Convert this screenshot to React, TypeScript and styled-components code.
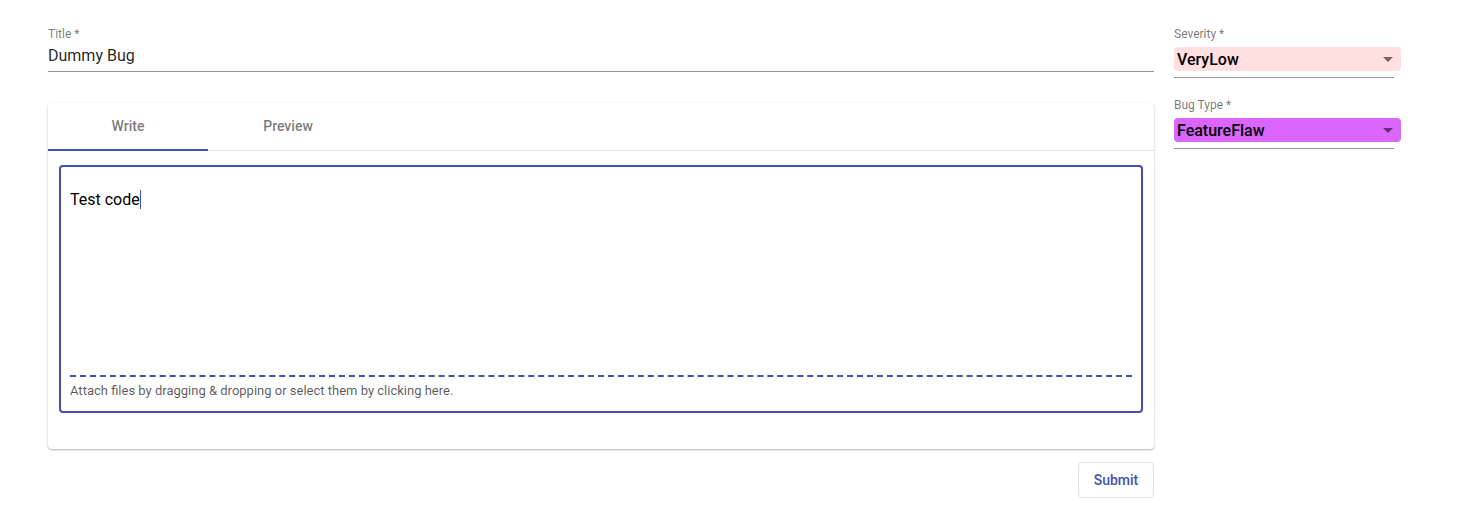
import React, { useState } from 'react';
import styled, { createGlobalStyle } from 'styled-components';

const GlobalStyle = createGlobalStyle`
  body {
    margin: 0;
    background: #fff;
    font-family: Roboto, "Liberation Sans", Arial, sans-serif;
  }
`;

const Page = styled.div`
  display: flex;
  gap: 20px;
  padding: 27px 48px 0 48px;
`;

const Main = styled.div`
  width: 1106px;
  display: flex;
  flex-direction: column;
`;

const Side = styled.div`
  width: 227px;
  display: flex;
  flex-direction: column;
  gap: 20px;
`;

const Field = styled.div`
  display: flex;
  flex-direction: column;
`;

const Label = styled.label`
  font-size: 12px;
  color: rgba(0, 0, 0, 0.54);
  line-height: 14px;
`;

const TitleInput = styled.div`
  font-size: 16px;
  color: rgba(0, 0, 0, 0.87);
  padding: 5px 0 5px;
  line-height: 20px;
  border-bottom: 1px solid rgba(0, 0, 0, 0.42);
`;

const SelectWrap = styled.div`
  margin-top: 6px;
  width: 220px;
  padding-bottom: 6px;
  border-bottom: 1px solid rgba(0, 0, 0, 0.42);
`;

const SelectBox = styled.div<{ bg: string }>`
  width: 227px;
  height: 24px;
  box-sizing: border-box;
  background: ${p => p.bg};
  border-radius: 4px;
  display: flex;
  align-items: center;
  justify-content: space-between;
  padding: 0 8px 0 3px;
  font-size: 16px;
  font-weight: 500;
  color: #000;
`;

const Caret = styled.span`
  width: 0;
  height: 0;
  border-left: 5px solid transparent;
  border-right: 5px solid transparent;
  border-top: 5px solid rgba(0, 0, 0, 0.54);
`;

const Paper = styled.div`
  margin-top: 31px;
  background: #fff;
  box-shadow: 0 1px 3px rgba(0, 0, 0, 0.2), 0 1px 1px rgba(0, 0, 0, 0.12);
  border-radius: 4px;
  padding-bottom: 36px;
`;

const Tabs = styled.div`
  display: flex;
  border-bottom: 1px solid #e0e0e0;
`;

const Tab = styled.button<{ active?: boolean }>`
  width: 160px;
  height: 48px;
  background: none;
  border: none;
  border-bottom: 2px solid ${p => (p.active ? '#3f51b5' : 'transparent')};
  margin-bottom: -1px;
  font-family: inherit;
  font-size: 14px;
  font-weight: 500;
  color: rgba(0, 0, 0, 0.54);
  cursor: pointer;
`;

const Editor = styled.div`
  margin: 14px 11px 0 11px;
  height: 248px;
  box-sizing: border-box;
  border: 2px solid #3f51b5;
  border-radius: 4px;
  display: flex;
  flex-direction: column;
  padding: 0 9px 12px;
`;

const Code = styled.div`
  flex: 1;
  padding-top: 23px;
  font-size: 16px;
  color: #000;
  line-height: 20px;
`;

const Cursor = styled.span`
  display: inline-block;
  width: 1px;
  height: 19px;
  background: #3f51b5;
  vertical-align: -4px;
`;

const Attach = styled.div`
  border-top: 2px dashed #3f51b5;
  padding-top: 6px;
  font-size: 13px;
  color: rgba(0, 0, 0, 0.66);
  line-height: 16px;
`;

const Actions = styled.div`
  display: flex;
  justify-content: flex-end;
  margin-top: 13px;
`;

const SubmitButton = styled.button`
  width: 76px;
  height: 36px;
  background: #fff;
  border: 1px solid #ddd;
  border-radius: 4px;
  font-family: inherit;
  font-size: 14px;
  font-weight: 500;
  color: #3f51b5;
  cursor: pointer;
`;

export default function App() {
  const [tab, setTab] = useState('write');

  return (
    <>
      <GlobalStyle />
      <Page>
        <Main>
          <Field>
            <Label>Title *</Label>
            <TitleInput>Dummy Bug</TitleInput>
          </Field>
          <Paper>
            <Tabs>
              <Tab active={tab === 'write'} onClick={() => setTab('write')}>Write</Tab>
              <Tab active={tab === 'preview'} onClick={() => setTab('preview')}>Preview</Tab>
            </Tabs>
            <Editor>
              <Code>
                Test code<Cursor />
              </Code>
              <Attach>Attach files by dragging &amp; dropping or select them by clicking here.</Attach>
            </Editor>
          </Paper>
          <Actions>
            <SubmitButton>Submit</SubmitButton>
          </Actions>
        </Main>
        <Side>
          <Field>
            <Label>Severity *</Label>
            <SelectWrap>
              <SelectBox bg="#ffdfdf">
                VeryLow
                <Caret />
              </SelectBox>
            </SelectWrap>
          </Field>
          <Field>
            <Label>Bug Type *</Label>
            <SelectWrap>
              <SelectBox bg="#da66ff">
                FeatureFlaw
                <Caret />
              </SelectBox>
            </SelectWrap>
          </Field>
        </Side>
      </Page>
    </>
  );
}
